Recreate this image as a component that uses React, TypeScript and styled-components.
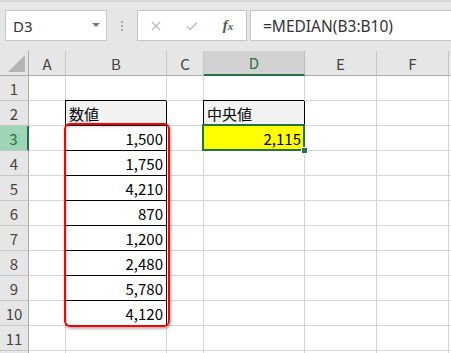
import React from 'react';
import styled, { createGlobalStyle } from 'styled-components';

const GlobalStyle = createGlobalStyle`
    * {
        box-sizing: border-box;
    }
    body {
        margin: 0;
        overflow: hidden;
        background: #fff;
        font-family: 'Noto Sans CJK JP', 'Noto Sans', sans-serif;
    }
`;

// G only shows as a sliver at the right edge, so its letter is left out
const COLS = ['A', 'B', 'C', 'D', 'E', 'F', ''];
const ROWS = 11;

const values = ['1,500', '1,750', '4,210', '870', '1,200', '2,480', '5,780', '4,120'];

type CellData = { text?: string; num?: boolean; box?: boolean; head?: boolean; bg?: string; sel?: boolean };

const cellAt = (row: number, col: string): CellData => {
    if (col === 'B' && row === 2) return { text: '数値', box: true, head: true };
    if (col === 'B' && row >= 3 && row <= 10) return { text: values[row - 3], num: true, box: true };
    if (col === 'D' && row === 2) return { text: '中央値', box: true, head: true };
    if (col === 'D' && row === 3) return { text: '2,115', num: true, box: true, bg: '#ffff00', sel: true };
    return {};
};

const App = () => {
    return (
        <Page>
            <GlobalStyle />
            <FormulaBar>
                <NameBox>
                    <span>D3</span>
                    <Caret />
                </NameBox>
                <Grip>
                    <i />
                    <i />
                    <i />
                </Grip>
                <FxBox>
                    <IconSlot>
                        <svg width="10" height="10" viewBox="0 0 10 10">
                            <path d="M1 1 L9 9 M9 1 L1 9" stroke="#bcbcbc" strokeWidth="1.3" fill="none" />
                        </svg>
                    </IconSlot>
                    <IconSlot>
                        <svg width="12" height="10" viewBox="0 0 12 10">
                            <path d="M1 5.2 L4.3 8.5 L11 1.5" stroke="#bcbcbc" strokeWidth="1.4" fill="none" />
                        </svg>
                    </IconSlot>
                    <IconSlot>
                        <Fx>
                            f<small>x</small>
                        </Fx>
                    </IconSlot>
                </FxBox>
                <FormulaInput>=MEDIAN(B3:B10)</FormulaInput>
            </FormulaBar>

            <Sheet>
                <Corner />
                {COLS.map((c, i) => (
                    <ColHead key={i} $sel={c === 'D'}>
                        {c}
                    </ColHead>
                ))}
                {Array.from({ length: ROWS }, (_, i) => i + 1).map((r) => (
                    <React.Fragment key={r}>
                        <RowHead $sel={r === 3}>{r}</RowHead>
                        {COLS.map((c, i) => {
                            const d = cellAt(r, c);
                            return (
                                <Cell key={i} $box={d.box} $num={d.num} $bg={d.bg ?? (d.head ? '#f2f2f2' : '#fff')} $sel={d.sel}>
                                    {d.text}
                                    {d.sel && (
                                        <Selection>
                                            <FillHandle />
                                        </Selection>
                                    )}
                                </Cell>
                            );
                        })}
                    </React.Fragment>
                ))}
                {/* row 12 only peeks in at the bottom edge */}
                <RowHead />
                {COLS.map((_, i) => (
                    <Cell key={i} $bg="#fff" />
                ))}
                <Callout />
            </Sheet>
        </Page>
    );
};
export default App;

const Page = styled.div`
    width: 451px;
    height: 353px;
    overflow: hidden;
    background: #fff;
`;

const FormulaBar = styled.div`
    height: 51px;
    display: flex;
    align-items: center;
    padding-left: 5px;
    background: #e6e6e6;
    box-shadow: inset 0 2px 0 #d9d9d9;
`;

const NameBox = styled.div`
    width: 102px;
    height: 31px;
    display: flex;
    align-items: center;
    justify-content: space-between;
    padding: 0 6px 0 7px;
    background: #fff;
    border: 1px solid #c6c6c6;
    font-family: 'Noto Sans', sans-serif;
    font-size: 15px;
    color: #333;
`;

const Caret = styled.span`
    width: 0;
    height: 0;
    border-left: 4px solid transparent;
    border-right: 4px solid transparent;
    border-top: 4px solid #7a7a7a;
    margin-top: -2px;
`;

const Grip = styled.div`
    width: 30px;
    display: flex;
    flex-direction: column;
    align-items: center;
    gap: 2px;
    i {
        width: 2px;
        height: 2px;
        background: #a8a8a8;
    }
`;

const FxBox = styled.div`
    width: 110px;
    height: 31px;
    display: flex;
    align-items: center;
    background: #fff;
    border: 1px solid #c6c6c6;
`;

const IconSlot = styled.div`
    flex: 1;
    display: flex;
    justify-content: center;
    align-items: center;
`;

const Fx = styled.span`
    font-family: 'Liberation Serif', serif;
    font-style: italic;
    font-weight: bold;
    font-size: 15px;
    color: #555;
    small {
        font-size: 11px;
    }
`;

const FormulaInput = styled.div`
    flex: 1;
    height: 31px;
    margin-left: 3px;
    margin-right: -5px;
    display: flex;
    align-items: center;
    padding-left: 12px;
    background: #fff;
    border: 1px solid #c6c6c6;
    font-family: 'Noto Sans', sans-serif;
    font-size: 15.5px;
    color: #333;
`;

const Sheet = styled.div`
    position: relative;
    display: grid;
    grid-template-columns: 29px 37px 101px 37px 101px 72px 72px 72px;
    grid-auto-rows: 25px;
    font-size: 15px;
`;

const Corner = styled.div`
    position: relative;
    background: #e6e6e6;
    border-right: 1px solid #ababab;
    border-bottom: 1px solid #ababab;
    &::after {
        content: '';
        position: absolute;
        right: 3px;
        bottom: 3px;
        width: 0;
        height: 0;
        border-left: 17px solid transparent;
        border-bottom: 17px solid #b5b5b5;
    }
`;

const ColHead = styled.div<{ $sel?: boolean }>`
    display: flex;
    align-items: center;
    justify-content: center;
    background: ${(p) => (p.$sel ? '#d2d2d2' : '#e6e6e6')};
    color: ${(p) => (p.$sel ? '#217346' : '#444')};
    border-right: 1px solid ${(p) => (p.$sel ? '#bcbcbc' : '#c6c6c6')};
    border-bottom: ${(p) => (p.$sel ? '2px solid #217346' : '1px solid #ababab')};
`;

const RowHead = styled.div<{ $sel?: boolean }>`
    display: flex;
    align-items: center;
    justify-content: center;
    background: ${(p) => (p.$sel ? '#9fd5b7' : '#e6e6e6')};
    color: ${(p) => (p.$sel ? '#217346' : '#444')};
    border-right: ${(p) => (p.$sel ? '2px solid #217346' : '1px solid #ababab')};
    border-bottom: 1px solid #c6c6c6;
`;

const Cell = styled.div<{ $box?: boolean; $num?: boolean; $bg: string; $sel?: boolean }>`
    position: relative;
    z-index: ${(p) => (p.$sel ? 2 : 'auto')};
    display: flex;
    align-items: center;
    justify-content: ${(p) => (p.$num ? 'flex-end' : 'flex-start')};
    padding: 0 3px 0 3px;
    background: ${(p) => p.$bg};
    border-right: 1px solid ${(p) => (p.$box ? '#000' : '#d4d4d4')};
    border-bottom: 1px solid ${(p) => (p.$box ? '#000' : '#d4d4d4')};
    box-shadow: ${(p) => (p.$box ? '-1px -1px 0 0 #000' : 'none')};
    color: #000;
    white-space: nowrap;
`;

const Selection = styled.div`
    position: absolute;
    top: -2px;
    left: -2px;
    right: -1px;
    bottom: -1px;
    border: 2px solid #217346;
    pointer-events: none;
`;

const FillHandle = styled.div`
    position: absolute;
    right: -5px;
    bottom: -5px;
    width: 7px;
    height: 7px;
    background: #217346;
    border: 1px solid #fff;
`;

const Callout = styled.div`
    position: absolute;
    left: 64px;
    top: 72px;
    width: 106px;
    height: 204px;
    border: 2px solid #f00;
    border-radius: 6px;
    box-shadow: 1px 2px 3px rgba(0, 0, 0, 0.3), inset 1px 2px 3px rgba(0, 0, 0, 0.15);
    z-index: 3;
    pointer-events: none;
`;
